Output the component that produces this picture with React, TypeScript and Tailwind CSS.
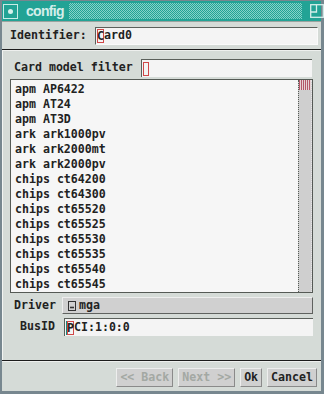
import React from 'react';

const mono = "font-['DejaVu_Sans_Mono','Liberation_Mono',monospace] font-bold text-[11.6px]";

const cards = [
  'apm AP6422',
  'apm AT24',
  'apm AT3D',
  'ark ark1000pv',
  'ark ark2000mt',
  'ark ark2000pv',
  'chips ct64200',
  'chips ct64300',
  'chips ct65520',
  'chips ct65525',
  'chips ct65530',
  'chips ct65535',
  'chips ct65540',
  'chips ct65545',
];

function Btn({ label, disabled }: { label: string; disabled?: boolean }) {
  return (
    <div
      className={`h-[19px] px-[3px] flex items-center bg-[#d0d0d0] border border-t-[#eeeeee] border-l-[#eeeeee] border-b-[#8a8a8a] border-r-[#8a8a8a] whitespace-pre ${
        disabled ? 'text-[#a3a8a3]' : 'text-[#222]'
      }`}
    >
      {label}
    </div>
  );
}

export default function App() {
  return (
    <div className={`w-[324px] h-[394px] bg-[#77878f] pt-[1px] pl-[2px] pr-[3px] pb-[3px] flex flex-col text-[#222] ${mono}`}>
      {/* title bar */}
      <div className="h-[20px] bg-[#22a395] flex items-center shrink-0">
        <div className="ml-[1px] w-[15px] h-[15px] shrink-0 border border-[#c9ece6] flex items-center justify-center">
          <div className="w-[5px] h-[5px] rounded-full bg-[#d6f1ec]" />
        </div>
        <span className="ml-[8px] font-['Liberation_Sans',Arial,sans-serif] font-bold text-[14px] tracking-[-0.7px] text-[#d4eeea]">
          config
        </span>
        <div className="ml-[5px] h-[16px] w-[233px] shrink-0 bg-[conic-gradient(#86d2c8_25%,#22a395_0_50%,#86d2c8_0_75%,#22a395_0)] bg-[length:2px_2px]" />
        <svg className="ml-[8px] shrink-0" width="14" height="14" viewBox="0 0 14 14" fill="none" stroke="#d4eeea" strokeWidth="1.3">
          <rect x="0.7" y="0.7" width="12.6" height="12.6" />
          <polyline points="6.5,0.7 6.5,8 0.7,8" />
        </svg>
      </div>

      {/* body */}
      <div className="flex-1 flex flex-col bg-[#d5dbd7] border-t border-[#9aa39f]">
        {/* identifier */}
        <div className="h-[27px] flex items-center pl-[8px] pr-[3px] shrink-0">
          <span>Identifier:</span>
          <div className="ml-auto w-[223px] h-[18px] bg-[#f4f4f4] border-t border-l border-[#5b605b] border-b border-b-[#fafafa] border-r border-r-[#fafafa] flex items-center pl-[1px]">
            <span className="shadow-[inset_0_0_0_1px_#d04848] leading-[14px]">C</span>
            <span>ard0</span>
          </div>
        </div>
        <div className="h-[1px] bg-[#1c1c1c]" />
        <div className="h-[1px] bg-[#eef0ee]" />

        {/* main panel */}
        <div className="flex-1 flex flex-col pl-[7px] pr-[8px] border-l border-[#f2f4f2]">
          <div className="mt-[8px] h-[18px] flex items-center">
            <span className="ml-[4px] whitespace-pre">Card model filter</span>
            <div className="ml-auto mr-[1px] w-[171px] h-[18px] bg-[#f4f4f4] border-t border-l border-[#5b605b] flex items-center pl-[1px]">
              <span className="inline-block w-[6px] h-[14px] shadow-[inset_0_0_0_1px_#d04848]" />
            </div>
          </div>

          {/* card list */}
          <div className="mt-[2px] h-[214px] flex border border-[#555a55] bg-[#f6f6f6]">
            <div className="flex-1 overflow-hidden pl-[4px] pt-[2px]">
              {cards.map((c) => (
                <div key={c} className="leading-[15px] whitespace-pre">
                  {c}
                </div>
              ))}
            </div>
            <div className="w-[14px] border-l border-[#555a55] bg-[#cfcfcf] border-r border-r-[#e6e6e6] border-dotted">
              <div className="h-[10px] bg-[repeating-linear-gradient(90deg,#b45868_0_1px,#e6d2d4_1px_2px)]" />
            </div>
          </div>

          {/* driver */}
          <div className="mt-[4px] h-[17px] flex items-center">
            <span className="ml-[4px] shrink-0">Driver</span>
            <div className="ml-auto w-[251px] h-[17px] shrink-0 bg-[#d0d0d0] border border-t-[#eeeeee] border-l-[#eeeeee] border-b-[#5f625f] border-r-[#5f625f] flex items-center pl-[5px]">
              <svg className="shrink-0" width="8" height="10" viewBox="0 0 8 10" fill="none" stroke="#333" strokeWidth="1">
                <rect x="0.5" y="0.5" width="7" height="9" />
                <line x1="2" y1="6.5" x2="6" y2="6.5" strokeWidth="1.6" />
              </svg>
              <span className="ml-[3px]">mga</span>
            </div>
          </div>

          {/* bus id */}
          <div className="mt-[4px] h-[18px] flex items-center">
            <span className="ml-[10px] shrink-0">BusID</span>
            <div className="ml-auto w-[249px] h-[18px] shrink-0 bg-[#f4f4f4] border-t border-l border-[#5b605b] flex items-center pl-[2px]">
              <span className="shadow-[-1px_0_0_#148c80,inset_0_0_0_1px_#d04848] leading-[14px]">P</span>
              <span>CI:1:0:0</span>
            </div>
          </div>
        </div>

        <div className="h-[1px] bg-[#1c1c1c]" />
        <div className="h-[1px] bg-[#eef0ee]" />

        {/* buttons */}
        <div className="h-[29px] flex justify-end gap-[5px] pt-[6px] pr-[4px]">
          <Btn label="<< Back" disabled />
          <Btn label="Next >>" disabled />
          <Btn label="Ok" />
          <Btn label="Cancel" />
        </div>
      </div>
    </div>
  );
}
